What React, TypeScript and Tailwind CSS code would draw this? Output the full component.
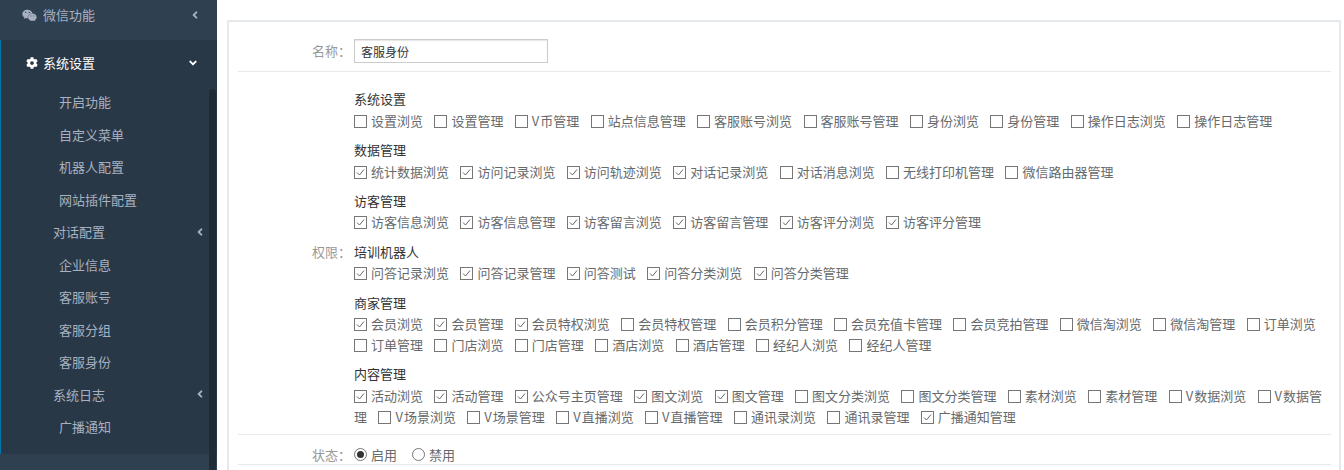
import { FaWeixin, FaCog, FaAngleLeft, FaAngleDown } from "react-icons/fa";

const font = { fontFamily: '"Noto Sans CJK SC", "Noto Sans", sans-serif' };

type Perm = [string, boolean];

function row(names: string, checked = 0): Perm[] {
  return names.split(" ").map((n, i) => [n, i < checked]);
}

const groups: { title: string; items: Perm[] }[] = [
  { title: "系统设置", items: row("设置浏览 设置管理 V币管理 站点信息管理 客服账号浏览 客服账号管理 身份浏览 身份管理 操作日志浏览 操作日志管理") },
  { title: "数据管理", items: row("统计数据浏览 访问记录浏览 访问轨迹浏览 对话记录浏览 对话消息浏览 无线打印机管理 微信路由器管理", 4) },
  { title: "访客管理", items: row("访客信息浏览 访客信息管理 访客留言浏览 访客留言管理 访客评分浏览 访客评分管理", 6) },
  { title: "培训机器人", items: row("问答记录浏览 问答记录管理 问答测试 问答分类浏览 问答分类管理", 5) },
  { title: "商家管理", items: row("会员浏览 会员管理 会员特权浏览 会员特权管理 会员积分管理 会员充值卡管理 会员竞拍管理 微信淘浏览 微信淘管理 订单浏览 订单管理 门店浏览 门店管理 酒店浏览 酒店管理 经纪人浏览 经纪人管理", 3) },
  {
    title: "内容管理",
    items: [
      ...row("活动浏览 活动管理 公众号主页管理 图文浏览 图文管理", 5),
      ...row("图文分类浏览 图文分类管理 素材浏览 素材管理 V数据浏览 V数据管理 V场景浏览 V场景管理 V直播浏览 V直播管理 通讯录浏览 通讯录管理"),
      ["广播通知管理", true],
    ],
  },
];

function Check({ on }: { on: boolean }) {
  return (
    <span className="inline-block w-[13px] h-[13px] border border-[#767676] bg-white mr-1 align-[-2px] box-border">
      {on && (
        <svg viewBox="0 0 11 11" className="w-[11px] h-[11px] block">
          <path d="M2 5.5 L4.5 8 L9 2.5" fill="none" stroke="#666" strokeWidth="1" />
        </svg>
      )}
    </span>
  );
}

function Radio({ on }: { on: boolean }) {
  return (
    <span className="w-[13px] h-[13px] rounded-full border border-[#767676] bg-white flex items-center justify-center mr-1">
      {on && <span className="w-[7px] h-[7px] rounded-full bg-[#333]" />}
    </span>
  );
}

function PermLabel({ name }: { name: string }) {
  // the V sits a little wider in the original font
  if (name.startsWith("V")) {
    return (
      <>
        <span className="mr-[1px]">V</span>
        {name.slice(1)}
      </>
    );
  }
  return <>{name}</>;
}

function SubItem({ label, arrow }: { label: string; arrow?: boolean }) {
  return (
    <div className={`h-[32.5px] flex items-center justify-between text-[13px] text-[#a7b1c2] ${arrow ? "pl-[53px] pr-[11px]" : "pl-[59px]"}`}>
      <span>{label}</span>
      {arrow && <FaAngleLeft className="text-[12px]" />}
    </div>
  );
}

function Sidebar() {
  return (
    <aside className="relative w-[217px] shrink-0 h-[470px] bg-[#2f4050] overflow-hidden">
      <div className="h-10 flex items-center justify-between pl-[22px] pr-4 pb-[10px] text-[13px] text-[#a7b1c2]">
        <span className="flex items-center">
          <FaWeixin className="text-[15px] w-[15px] mr-1.5" />
          微信功能
        </span>
        <FaAngleLeft className="text-[12px]" />
      </div>
      <div className="h-[414px] bg-[#293846] border-l border-[#0077a8]">
        <div className="h-[46px] flex items-center justify-between pl-[25px] pr-[18px] text-[13px] text-white">
          <span className="flex items-center">
            <FaCog className="text-[12px] mr-[5px]" />
            系统设置
          </span>
          <FaAngleDown className="text-[12px]" />
        </div>
        <div className="-ml-px -mt-[0.3px]">
          <SubItem label="开启功能" />
          <SubItem label="自定义菜单" />
          <SubItem label="机器人配置" />
          <SubItem label="网站插件配置" />
          <SubItem label="对话配置" arrow />
          <SubItem label="企业信息" />
          <SubItem label="客服账号" />
          <SubItem label="客服分组" />
          <SubItem label="客服身份" />
          <SubItem label="系统日志" arrow />
          <SubItem label="广播通知" />
        </div>
      </div>
      <div className="absolute left-[209px] top-[89px] w-[7px] h-[400px] rounded-t bg-[#1f2c36]" />
    </aside>
  );
}

export default function App() {
  return (
    <div className="flex w-[1344px] h-[470px] overflow-hidden bg-white text-[13px] text-[#676a6c]" style={font}>
      <Sidebar />
      <main className="flex-1 pl-2.5 pr-[3px] pt-5">
        <div className="border-2 border-[#e7eaec] border-b-0 h-[460px] pl-[9px] pr-2">
          <div className="flex items-center h-[50px] border-b border-[#e7eaec] pt-[9px]">
            <span className="w-[113px] text-right text-[#999]">名称：</span>
            <input
              readOnly
              value="客服身份"
              className="ml-[3px] w-[194px] h-6 border border-[#ccc] shadow-[inset_0_1px_1px_rgba(0,0,0,0.1)] px-[6px] text-xs text-[#333] outline-none"
            />
          </div>
          <div className="flex items-center border-b border-[#e7eaec] pt-[16.4px] pb-[7px]">
            <span className="w-[113px] shrink-0 text-right text-[#999] pb-[12px]">权限：</span>
            <div className="ml-[3px] w-[976px] leading-[21px]">
              {groups.map((g) => (
                <div key={g.title} className="mb-[8.3px] last:mb-0">
                  <div className="h-[21.5px] text-[#333]">{g.title}</div>
                  <div>
                    {g.items.map(([name, on], i) => (
                      <span key={i} className="mr-[11.4px]">
                        <Check on={on} />
                        <PermLabel name={name} />
                      </span>
                    ))}
                  </div>
                </div>
              ))}
            </div>
          </div>
          <div className="flex items-center h-[30px] border-b border-[#e7eaec] pt-[10px]">
            <span className="w-[113px] text-right text-[#999]">状态：</span>
            <div className="ml-[3px] flex items-center">
              <Radio on />
              <span className="mr-[15px]">启用</span>
              <Radio on={false} />
              <span>禁用</span>
            </div>
          </div>
        </div>
      </main>
    </div>
  );
}
